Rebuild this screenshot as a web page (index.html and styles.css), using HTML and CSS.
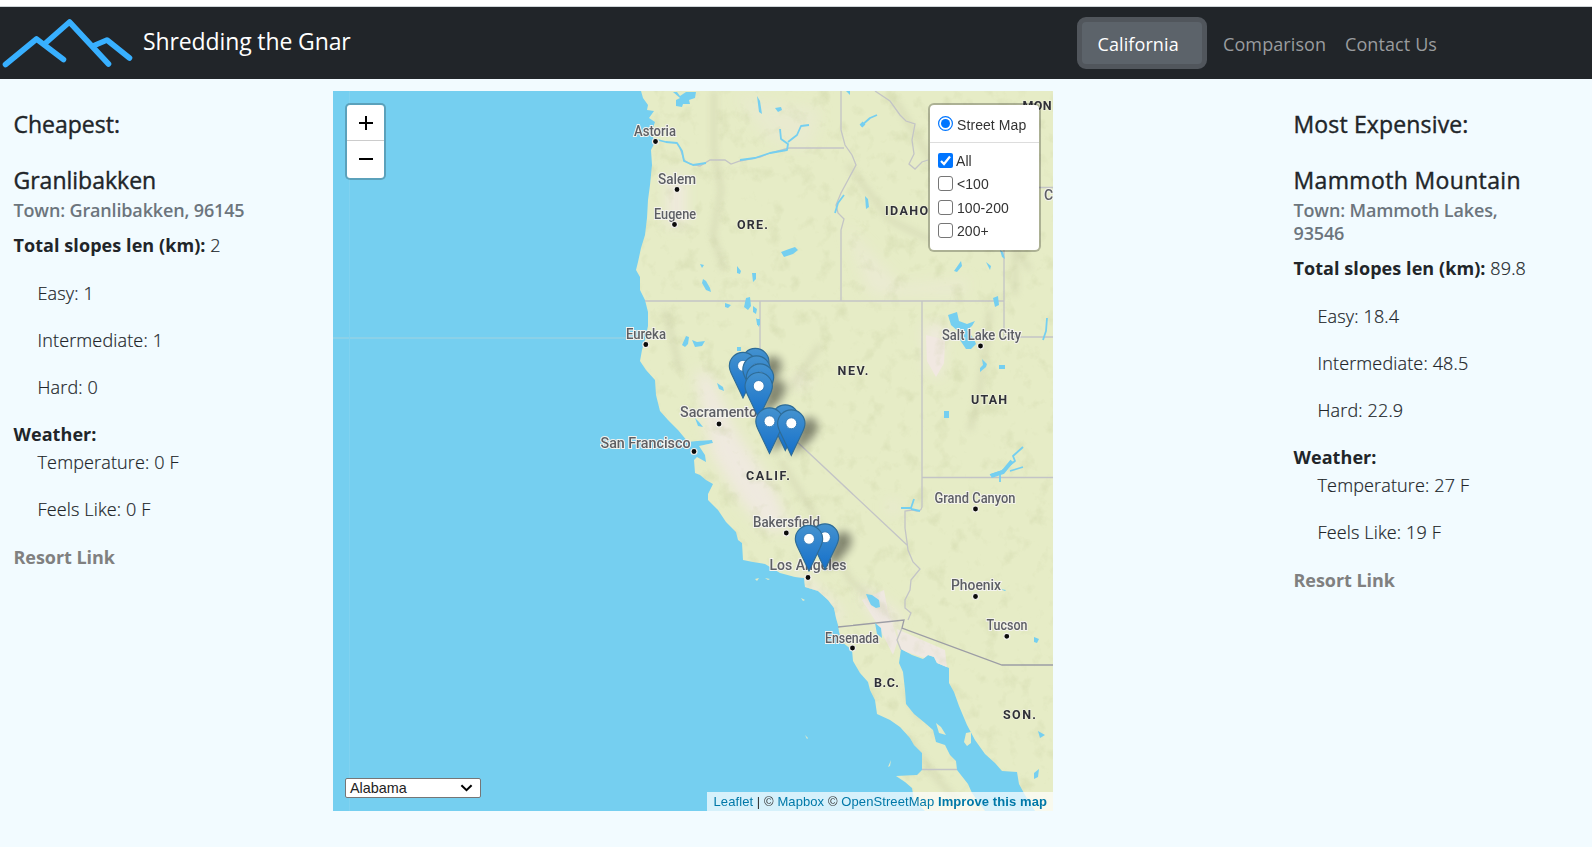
FILE: index.html
```html
<!DOCTYPE html>
<html lang="en">
<head>
<meta charset="utf-8">
<title>Shredding the Gnar</title>
<link rel="stylesheet" href="styles.css">
</head>
<body>
<nav class="navbar">
  <svg class="logo" viewBox="0 0 143 72" fill="none" stroke="#38b0ff" stroke-width="5.6" stroke-linecap="round" stroke-linejoin="round">
    <path d="M5.500 57.500 36.500 32 63.500 52.500M44.500 37 69.500 15 108.500 57M93 39 107 33 129.500 51"/>
  </svg>
  <a class="brand">Shredding the Gnar</a>
  <div class="links">
    <a class="active">California</a>
    <a class="comparison">Comparison</a>
    <a class="contact">Contact Us</a>
  </div>
</nav>
<main class="layout">
  <section class="resort">
    <h5 class="title">Cheapest:</h5>
    <h5 class="title">Granlibakken</h5>
    <h6 class="town">Town: Granlibakken, 96145</h6>
    <p class="total"><b>Total slopes len (km):</b> 2</p>
    <p class="item">Easy: 1</p>
    <p class="item">Intermediate: 1</p>
    <p class="item">Hard: 0</p>
    <p class="weather"><b>Weather:</b></p>
    <p class="item">Temperature: 0 F</p>
    <p class="item">Feels Like: 0 F</p>
    <a class="link">Resort Link</a>
  </section>
  <div class="map">
    <svg class="tiles" viewBox="333 91 720 720">
      <defs>
        <clipPath id="land"><path id="coast" d="M641 91 643 98 648 105 647 110 654 111 649 118 655 122 653 128 652 135 655 142 651 150 652 165 650 185 648 200 647 218 645 235 641 248 638 262 636 270 640 277 640 290 645 300 648 312 648 326 645 340 642 350 640 361 646 370 655 380 656 395 660 411 668 420 678 430 688 442 697 441 712 440 713 443 699 446 705 455 706 462 697 457 694 460 695 473 700 475 706 480 713 484 708 494 708 500 718 510 726 522 736 532 738 540 742 543 743 560 753 562 765 564 780 573 795 577 804 578 805 587 818 591 828 600 834 608 836 618 838 625 839 632 842 642 852 650 853 661 860 673 868 682 870 690 875 700 877 714 890 720 900 727 910 738 914 745 922 753 922 770 917 775 896 776 905 782 912 788 914 800 925 811H985L972 793 968 784 957 770 956 761 950 755 945 745 936 742 933 730 925 723 914 714 906 704 905 690 903 672 899 663 901 649 912 655 923 659 928 655 934 657 937 663 949 668 949 683 954 692 959 706 967 725 975 740 985 754 995 763 1002 771 1017 772 1019 784 1025 795 1035 811H1053V91Z"/></clipPath>
        <filter id="hills" x="0" y="0" width="100%" height="100%" color-interpolation-filters="sRGB">
          <feTurbulence type="fractalNoise" baseFrequency=".06 .055" numOctaves="4" seed="8"/>
          <feColorMatrix values="0 0 0 0 .76  0 0 0 0 .79  0 0 0 0 .6  2.4 1.4 0 0 -2.05"/>
        </filter>
        <filter id="soft" x="-50%" y="-50%" width="200%" height="200%"><feGaussianBlur stdDeviation="7"/></filter>
        <filter id="haze" x="-50%" y="-50%" width="200%" height="200%"><feGaussianBlur stdDeviation="3"/></filter>
        <filter id="shade" x="-80%" y="-80%" width="260%" height="260%"><feGaussianBlur stdDeviation="4"/></filter>
        <linearGradient id="pinfill" x1="0" y1="0" x2="0" y2="1"><stop offset="0" stop-color="#4492cf"/><stop offset="1" stop-color="#146fca"/></linearGradient>
        <g id="shadow"><path d="M0 0 10-34Q19-43 26-34 29-25 19-15Z" fill="#000" opacity=".42" filter="url(#shade)"/></g>
        <g id="pin" transform="scale(1.14) translate(-12.500 -41)">
          <path d="M12.500.5C5.900.5.500 5.900.500 12.500c0 3.200 1.400 5.900 2.600 8.300L12.500 40.600l9.400-19.800c1.200-2.400 2.600-5.100 2.600-8.300C24.500 5.900 19.100.5 12.500.5z" fill="url(#pinfill)" stroke="#2e6c97"/>
          <circle cx="12.500" cy="12.300" r="4.800" fill="#fff" stroke="#2f78b5" stroke-width=".8"/>
        </g>
      </defs>
      <rect x="333" y="91" width="720" height="720" fill="#75cff0"/>
      <path d="M333 338H642" stroke="#93d2e6" stroke-width="1.500"/>
      <path d="M349.500 91V811" stroke="#80d2f0"/>
      <use href="#coast" fill="#e6ecc6"/>
      <g clip-path="url(#land)">
        <g fill="#efe9df" filter="url(#soft)">
          <path d="M695 370 710 375 735 430 775 490 790 530 765 530 740 500 712 455Z"/>
          <path d="M795 565 840 610 845 625 825 610 800 585Z"/><path d="M925 325H945L940 378 928 370Z"/>
          <path d="M668 175H685V225H668Z"/><path d="M845 225 900 285 970 280 960 295 870 295Z" opacity=".45"/>
          <path d="M860 585 900 615 892 640 865 605Z"/><path d="M735 95 820 110 810 150 770 140Z" opacity=".35"/><ellipse cx="801" cy="381" rx="8" ry="5"/><ellipse cx="893" cy="507" rx="6" ry="4"/>
        </g>
        <path d="M897 629 945 650 947 668 925 658 900 650ZM884 590 888 612 898 640 893 655 878 625 862 600Z" fill="#efe8e1"/>
        <path d="M926 335 945 340 944 363 936 377 927 361Z" fill="#f1e8e1"/>
        <rect x="590" y="91" width="463" height="720" filter="url(#hills)" opacity=".3"/>
        <g fill="none" stroke="#c9cca9" stroke-width="4" opacity=".6" filter="url(#haze)">
          <path d="M714 91V150L721 190 713 235 724 270M780 460 805 500 831 544 850 580 888 614M895 100 925 150 945 185 1000 225 1030 270M848 165 890 220 930 240M820 345 790 390M990 310 980 390 970 430M1015 220V295M665 310 680 370M906 735 930 770 960 805M905 690 921 720"/>
        </g>
      </g>
      <g fill="none" stroke="#c3c4c6" stroke-width="1.300">
        <path d="M680 148 684 160 690 164 700 166 710 160 725 160 731 164 740 161 760 157 770 153 789 148H844M841 91V130L845 145 852 155 856 165 848 180 841 193 836 205 838 213 844 219 841 230V301M645 301H1004M760 301V407L907 545M922 301V507Q921 513 912 510L905 511 905 528 907 542 908 550 913 562 920 569 911 580 910 590 905 600 905 608 911 613 908 620M922 477.500H1053M1004 248V337H1053M875 91 890 101 900 115 906 121 915 124 912 140 914 154 909 164 915 169 922 162 928 160M1038 187.500H1053M902 628 897 640 901 650M922 769.500H957" />
        <path d="M838 627 904 620 902 628 1002 665H1053" stroke="#9c9da5"/>
      </g>
      <g fill="#75cff0">
        <path d="M673 92H677L680 96 686 92H696L695 98 689 100 690 104 683 104 682 107 676 106 676 100 680 98ZM757 96l3 5 2 13-3-2ZM775 108l6-1 1 3-4 2ZM781 252 789 249 795 247 798 250 793 254 784 257ZM737 266l4 5-1 3-3-1ZM752 273h4v6l-3 3ZM703 279l3 2 4 7 1 4-5-2-4-7ZM725 303l6 2-3 3-3-1ZM746 298l4-1 1 9-3 4-4-3ZM753 306l4 3-1 5-3-2ZM756 318l4 4-1 5-2-3ZM700 264l4 1-2 3ZM686 336l3 1-1 7-3 3-3-2ZM692 340l5 2 8-1-3 5-7 1ZM717 383l6 4 1 4-5-2ZM737 347h4v4h-4ZM757 319h3v6h-3ZM695 418l4 4 4 5-5-1ZM865 196l3 3 1 8-3 2ZM846 91h4v4ZM954 271l7-10 1 5-5 6ZM986 262l5 4-1 4ZM1000 250l3 2 2 7-3-2ZM993 298l5-2 1 9-4 2Z"/>
        <path d="M948 315 957 312 959 321 967 324 975 321 972 326 967 330 974 339 976 344 971 349 966 349 960 340 959 332 951 325ZM982 359l5 5-1 3-6 5v-4l3-3ZM999 365h6v4h-6ZM944 411h5v7h-5ZM866 594l6 1 7 5 1 7-4 1-5-3-3-6ZM875 623l6 5 1 10-5-4ZM1034 637l5 2-2 4-3-1ZM1038 731l7 4-5 3ZM1034 773l5-4-1 8-4 2ZM1000 589l6 1-1 1Z"/>
      </g>
      <g fill="none" stroke="#75cff0" stroke-width="1.800" stroke-linejoin="round">
        <path d="M654 139 666 142 677 143 682 151 684 161 693 165 706 163M740 160 755 158 770 153 787 150 788 144 781 139 780 129M788 142 797 135 801 126 809 125M844 195 838 203 835 213M861 126 870 118 877 115M990 475 1002 471 1015 461 1013 456 1023 447M1010 471 1023 467M1000 475 1000 482M901 508 911 508 914 499M911 509 920 511M1047 318 1046 331 1043 340" />
        <path d="M991 476 1003 472 1012 461M861 126 864 123" stroke-width="4"/>
      </g>
      <path d="M936 723 941 727 946 735 939 733ZM966 733 971 732 971 743 967 746 964 742ZM891 760l-3 7 2-1ZM755 579l4-1-2 3ZM765 578l5 1-2 1ZM801 598l4 2-2 1ZM805 735l3 3-1 1Z" fill="#e6ecc6"/>
      <g class="places">
        <text x="634" y="135.500" textLength="42" lengthAdjust="spacingAndGlyphs">Astoria</text><text x="658" y="184" textLength="38" lengthAdjust="spacingAndGlyphs">Salem</text><text x="654" y="218.500" textLength="42" lengthAdjust="spacingAndGlyphs">Eugene</text>
        <text x="626" y="338.500" textLength="40" lengthAdjust="spacingAndGlyphs">Eureka</text><text x="680" y="416.500" textLength="77" lengthAdjust="spacingAndGlyphs">Sacramento</text><text x="600.500" y="447.500" textLength="90" lengthAdjust="spacingAndGlyphs">San Francisco</text>
        <text x="753" y="526.500" textLength="67" lengthAdjust="spacingAndGlyphs">Bakersfield</text><text x="769.500" y="570" textLength="77" lengthAdjust="spacingAndGlyphs">Los Angeles</text><text x="825" y="642.500" textLength="54" lengthAdjust="spacingAndGlyphs">Ensenada</text>
        <text x="942" y="339.500" textLength="79" lengthAdjust="spacingAndGlyphs">Salt Lake City</text><text x="934.500" y="502.500" textLength="81" lengthAdjust="spacingAndGlyphs">Grand Canyon</text><text x="951" y="589.500" textLength="50" lengthAdjust="spacingAndGlyphs">Phoenix</text><text x="986.500" y="630" textLength="41" lengthAdjust="spacingAndGlyphs">Tucson</text><text x="1044" y="199.500">C</text>
      </g>
      <g class="states">
        <text x="737" y="228.500" textLength="31">ORE.</text><text x="885" y="215" textLength="43">IDAHO</text><text x="837.500" y="375" textLength="31">NEV.</text><text x="971" y="404" textLength="36">UTAH</text><text x="746" y="479.500" textLength="44">CALIF.</text><text x="874" y="686.500" textLength="25">B.C.</text><text x="1003" y="719" textLength="33">SON.</text><text x="1022.500" y="110" textLength="29">MON</text>
      </g>
      <g stroke="#f3f1eb" stroke-width="1.200" fill="#0b0b0b">
        <circle cx="655.500" cy="141.500" r="3"/><circle cx="677" cy="189.500" r="3"/><circle cx="674.500" cy="224.500" r="3"/><circle cx="645.800" cy="344.500" r="3"/><circle cx="719" cy="424" r="3"/><circle cx="694" cy="451.500" r="3"/><circle cx="786.300" cy="533" r="3"/><circle cx="808" cy="577.500" r="3"/><circle cx="852.500" cy="648" r="3"/><circle cx="980.500" cy="346" r="3"/><circle cx="975.500" cy="509" r="3"/><circle cx="975.500" cy="596.500" r="3"/><circle cx="1006.800" cy="636.300" r="3"/>
      </g>
      <g><use href="#shadow" x="755" y="395"/><use href="#shadow" x="759" y="418"/><use href="#shadow" x="770" y="454"/><use href="#shadow" x="791" y="456"/><use href="#shadow" x="825" y="570"/></g>
      <g><use href="#pin" x="755.300" y="394.500"/><use href="#pin" x="743" y="398.500"/><use href="#pin" x="756.500" y="402"/><use href="#pin" x="760" y="410"/><use href="#pin" x="758.700" y="418.700"/><use href="#pin" x="785.300" y="451"/><use href="#pin" x="769.500" y="454"/><use href="#pin" x="791.300" y="456"/><use href="#pin" x="825" y="570"/><use href="#pin" x="809" y="571.500"/></g>
    </svg>
    <div class="zoom"><a><svg viewBox="0 0 16 16"><path d="M8 1V15M1 8H15"/></svg></a><a><svg viewBox="0 0 16 16"><path d="M1 8H15"/></svg></a></div>
    <div class="layers">
      <label class="base"><svg class="ctl" viewBox="0 0 15 15"><circle cx="7.500" cy="7.500" r="6.900" fill="#fff" stroke="#0075ff" stroke-width="1.200"/><circle cx="7.500" cy="7.500" r="4.500" fill="#0075ff"/></svg><span>Street Map</span></label>
      <div class="overlays">
        <label><svg class="ctl" viewBox="0 0 15 15"><rect width="15" height="15" rx="2" fill="#0075ff"/><path d="M3 8 6 11 12 3.500" fill="none" stroke="#fff" stroke-width="2.200"/></svg><span class="all">All</span></label>
        <label><i class="box"></i><span>&lt;100</span></label>
        <label><i class="box"></i><span>100-200</span></label>
        <label><i class="box"></i><span>200+</span></label>
      </div>
    </div>
    <div class="select"><span>Alabama</span><svg viewBox="0 0 14 8"><path d="M1.500 1 7 6.300 12.500 1"/></svg></div>
    <div class="attribution"><a>Leaflet</a> | © <a>Mapbox</a> © <a>OpenStreetMap</a> <a><b>Improve this map</b></a></div>
  </div>
  <section class="resort expensive">
    <h5 class="title">Most Expensive:</h5>
    <h5 class="title mammoth">Mammoth Mountain</h5>
    <h6 class="town">Town: Mammoth Lakes,<br>93546</h6>
    <p class="total"><b>Total slopes len (km):</b> 89.8</p>
    <p class="item">Easy: 18.4</p>
    <p class="item">Intermediate: 48.5</p>
    <p class="item">Hard: 22.9</p>
    <p class="weather"><b>Weather:</b></p>
    <p class="item">Temperature: 27 F</p>
    <p class="item">Feels Like: 19 F</p>
    <a class="link">Resort Link</a>
  </section>
</main>
</body>
</html>
```
FILE: styles.css
```css
* { box-sizing: border-box; }
body {
  margin: 0;
  height: 847px;
  overflow: hidden;
  background: #f2fbff;
  border-top: 6px solid #fff;
  color: #212529;
  font: 300 18px/28px "Open Sans", "Noto Sans", sans-serif;
}
h5, h6, p { margin: 0; }
b { font-weight: 700; }
.navbar {
  display: flex;
  height: 73px;
  border-top: 1px solid #cfd5d8;
  background: #212529;
  white-space: nowrap;
}
.logo { width: 143px; height: 72px; flex: none; }
.brand { width: 934px; padding-top: 19.5px; font-size: 23px; font-weight: 400; letter-spacing: -0.12px; color: #fff; }
.links { display: flex; align-items: flex-start; padding-top: 10px; font-weight: 400; color: #9a9c9e; letter-spacing: 0.1px; }
.links a { padding-top: 13px; }
.links .active {
  width: 130px;
  height: 52px;
  margin-right: 16px;
  padding: 8px 0 0 15.5px;
  border: 5px solid #51565c;
  border-radius: 9px;
  background: #5c636a;
  color: #fff;
}
.comparison { width: 122px; }
.layout { display: flex; }
.resort { width: 333px; padding: 31px 13.5px 0; white-space: nowrap; letter-spacing: 0.15px; }
.resort p { -webkit-text-stroke: 0.2px; }
.resort p b { -webkit-text-stroke: 0; letter-spacing: 0.07px; }
.expensive { width: 312px; margin-left: 227px; }
.title { font-size: 23px; font-weight: 500; line-height: 28px; letter-spacing: 0; -webkit-text-stroke: 0.4px; }
.title + .title { margin-top: 28px; }
.expensive .title { letter-spacing: 0.15px; }
.expensive .mammoth { letter-spacing: 0.35px; }
.town { margin-top: 5px; font-size: 18px; font-weight: 600; line-height: 23px; letter-spacing: -0.15px; color: #6c757d; }
.total { margin: 9px 0 20px; }
.item { margin: 0 0 19px 24px; }
.link { display: block; margin-top: 20px; font-weight: 700; letter-spacing: -0.05px; color: #808080; }
.map { position: relative; width: 720px; height: 720px; margin-top: 12px; overflow: hidden; font: 14px/20px "Liberation Sans", Arial, sans-serif; }
.tiles { display: block; width: 720px; height: 720px; }
.places { font: 500 14px Roboto, sans-serif; fill: #5d5f64; stroke: #f4f3ee; stroke-width: 2px; paint-order: stroke; }
.states { font: 700 12.5px Roboto, sans-serif; fill: #303138; stroke: #eef0dc; stroke-width: 1.5px; paint-order: stroke; }
.zoom { position: absolute; left: 12px; top: 12px; width: 41px; height: 77px; border: 2px solid rgba(0, 0, 0, .22); border-radius: 5px; background: #fff; background-clip: padding-box; }
.zoom a { display: flex; height: 36px; align-items: center; justify-content: center; padding-left: 1px; }
.zoom a:first-child { border-bottom: 1px solid #ccc; }
.zoom svg { width: 16px; height: 16px; fill: none; stroke: #000; stroke-width: 2; }
.layers { position: absolute; left: 595px; top: 12px; width: 113px; height: 149px; border: 2px solid rgba(0, 0, 0, .25); border-radius: 6px; background: #fff; background-clip: padding-box; color: #333; }
.layers label { display: flex; align-items: center; height: 23.3px; padding-left: 8px; gap: 4px; }
.layers span { padding-top: 1px; letter-spacing: 0.08px; }
.layers .base { height: 38px; border-bottom: 1px solid #ddd; }
.layers .base span { padding-top: 3px; }
.overlays { padding-top: 6px; }
.overlays .all { margin-left: -1px; }
.ctl, .box { width: 15px; height: 15px; flex: none; }
.box { border: 1px solid #767676; border-radius: 3px; background: #fff; }
.select { position: absolute; left: 12px; top: 687px; width: 136px; height: 20px; display: flex; align-items: center; justify-content: space-between; padding: 0 7px 0 4px; border: 1px solid #767676; border-radius: 2px; background: #fff; color: #222; font-size: 14.4px; }
.select svg { width: 13px; height: 8px; fill: none; stroke: #000; stroke-width: 2.2; }
.attribution { position: absolute; right: 0; bottom: 0; width: 346px; height: 19px; padding-left: 6.5px; background: rgba(255, 255, 255, .7); font-size: 13px; line-height: 19px; letter-spacing: 0.09px; color: #333; white-space: nowrap; }
.attribution a { color: #0078a8; }
```
